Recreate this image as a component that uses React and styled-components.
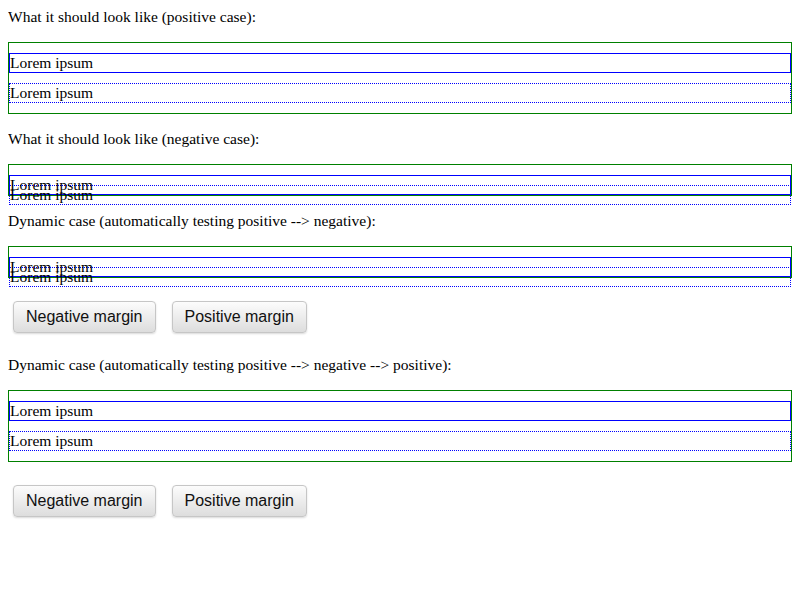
import styled, { createGlobalStyle } from "styled-components";

const GlobalStyle = createGlobalStyle`
  body {
    margin: 8px;
    font-family: "Liberation Serif", "Times New Roman", serif;
    font-size: 15.5px;
    line-height: 18px;
    color: #000;
    background: #fff;
  }
`;

const Caption = styled.div`
  line-height: 18px;
`;

const Frame = styled.div`
  border: 1px solid green;
  margin: 16px 0;
`;

const Box = styled.div`
  border: 1px ${(props) => (props.$dotted ? "dotted" : "solid")} blue;
  margin: ${(props) => (props.$negative ? "-20px 0 -10px" : "10px 0")};
  line-height: 18px;
`;

const ButtonRow = styled.div`
  display: flex;
  gap: 16px;
  padding: 7px 5px;
  margin: 16px 0;
`;

const Button = styled.button`
  font-family: "Liberation Sans", Arial, sans-serif;
  font-size: 16px;
  line-height: 18px;
  color: #111;
  padding: 6px 12px;
  border: 1px solid #c6c6c6;
  border-radius: 4px;
  background: linear-gradient(#fcfcfc, #dddddd);
  box-shadow: 0 1px 2px rgba(0, 0, 0, 0.15);
`;

function Example({ negative }) {
  return (
    <Frame>
      <Box>Lorem ipsum</Box>
      <Box $dotted $negative={negative}>
        Lorem ipsum
      </Box>
    </Frame>
  );
}

function Controls() {
  return (
    <ButtonRow>
      <Button>Negative margin</Button>
      <Button>Positive margin</Button>
    </ButtonRow>
  );
}

export default function App() {
  return (
    <>
      <GlobalStyle />
      <Caption>What it should look like (positive case):</Caption>
      <Example />
      <Caption>What it should look like (negative case):</Caption>
      <Example negative />
      <Caption>Dynamic case (automatically testing positive --&gt; negative):</Caption>
      <Example negative />
      <Controls />
      <Caption>
        Dynamic case (automatically testing positive --&gt; negative --&gt; positive):
      </Caption>
      <Example />
      <Controls />
    </>
  );
}
